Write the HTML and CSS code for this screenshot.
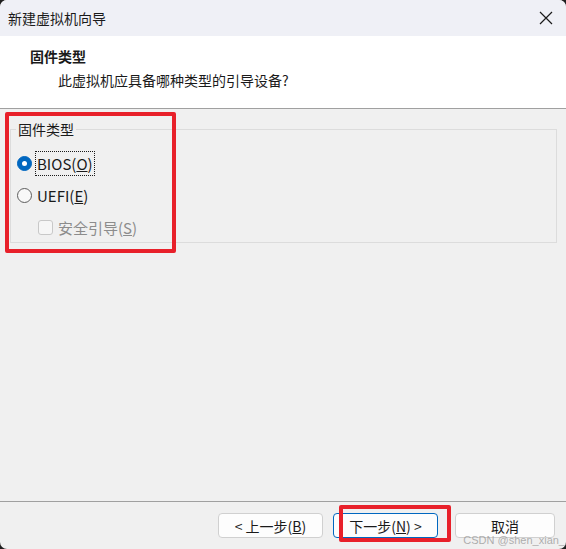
FILE: index.html
```html
<!DOCTYPE html>
<html lang="zh-CN">

<head>
  <meta charset="UTF-8">
  <title>新建虚拟机向导</title>
  <link rel="stylesheet" href="styles.css">
</head>

<body>
  <div class="janela">
    <!-- Barra de título -->
    <div class="titulo">
      <span>新建虚拟机向导</span>
      <svg class="fechar" width="14" height="14" viewBox="0 0 14 14">
        <path d="M1 1 L13 13 M13 1 L1 13" stroke="#1a1a1a" stroke-width="1.2" fill="none" />
      </svg>
    </div>

    <!-- Cabeçalho -->
    <div class="cabecalho">
      <div class="cab-titulo">固件类型</div>
      <div class="cab-sub">此虚拟机应具备哪种类型的引导设备?</div>
    </div>

    <!-- Conteúdo -->
    <div class="conteudo">
      <fieldset class="grupo">
        <legend>固件类型</legend>
        <label class="opcao">
          <span class="radio marcado"></span>
          <span class="foco">BIOS(<u>O</u>)</span>
        </label>
        <label class="opcao">
          <span class="radio"></span>
          <span>UEFI(<u>E</u>)</span>
        </label>
        <label class="opcao desativado">
          <span class="caixa"></span>
          <span>安全引导(<u>S</u>)</span>
        </label>
      </fieldset>
      <div class="marca marca-grupo"></div>
    </div>

    <!-- Rodapé com botões -->
    <div class="rodape">
      <button class="botao">&lt; 上一步(<u>B</u>)</button>
      <button class="botao padrao">下一步(<u>N</u>) &gt;</button>
      <button class="botao cancelar">取消</button>
      <div class="marca marca-botao"></div>
      <span class="agua">CSDN @shen_xian_</span>
    </div>
  </div>
</body>

</html>
```

FILE: styles.css
```css
/* Estilos Gerais */
html,
body {
  margin: 0;
  height: 100%;
  background: #1f1f1f;
}

body {
  font-family: "Noto Sans CJK SC", "Noto Sans", sans-serif;
  font-size: 14px;
  color: #1a1a1a;
}

.janela {
  display: flex;
  flex-direction: column;
  height: 549px;
  width: 566px;
  background: #f0f0f0;
  border-radius: 7px;
  overflow: hidden;
}

/* Barra de título */
.titulo {
  display: flex;
  align-items: center;
  justify-content: space-between;
  height: 36px;
  padding: 0 13px 0 8px;
  background: #eff0f6;
  line-height: 1;
}

/* Cabeçalho */
.cabecalho {
  background: #ffffff;
  border-bottom: 1px solid #a0a0a0;
  box-sizing: border-box;
  height: 73px;
  padding-top: 10px;
}

.cab-titulo {
  font-weight: bold;
  padding-left: 30px;
  line-height: 20px;
}

.cab-sub {
  padding-left: 58px;
  margin-top: 4px;
  line-height: 20px;
}

/* Conteúdo */
.conteudo {
  flex: 1;
  position: relative;
  padding: 12px 9px 0 10px;
}

.grupo {
  margin: 0;
  height: 122px;
  box-sizing: border-box;
  border: 1px solid #dcdcdc;
  padding: 10px 0 0 6px;
}

.grupo legend {
  padding: 0 2px;
  margin-left: -1px;
  line-height: 16px;
}

.opcao {
  display: flex;
  align-items: center;
  gap: 5px;
  height: 32px;
}

.opcao .foco,
.opcao span:last-child {
  font-size: 15px;
}

.radio {
  width: 13px;
  height: 13px;
  border: 1px solid #5d5d5d;
  border-radius: 50%;
  background: #f8f8f8;
  position: relative;
}

.radio.marcado {
  background: #0067c0;
  border-color: #0067c0;
}

.radio.marcado::after {
  content: "";
  position: absolute;
  left: 4px;
  top: 4px;
  width: 5px;
  height: 5px;
  border-radius: 50%;
  background: #ffffff;
}

.foco {
  outline: 1px dotted #1a1a1a;
  padding: 1px 1px;
  margin-left: -1px;
}

.desativado {
  color: #8c8c8c;
  padding-left: 21px;
  gap: 5px;
}

.caixa {
  width: 13px;
  height: 13px;
  border: 1px solid #c8c8c8;
  border-radius: 3px;
  background: #f6f6f6;
}

/* Marcações vermelhas */
.marca {
  position: absolute;
  border: 4px solid #e8202a;
  border-radius: 2px;
}

.marca-grupo {
  left: 5px;
  top: 3px;
  width: 163px;
  height: 133px;
}

/* Rodapé */
.rodape {
  position: relative;
  display: flex;
  justify-content: flex-end;
  align-items: flex-start;
  height: 48px;
  box-sizing: border-box;
  border-top: 1px solid #a0a0a0;
  padding: 11px 11px 0 0;
}

.botao {
  width: 105px;
  height: 25px;
  font-family: inherit;
  font-size: 14px;
  color: #1a1a1a;
  background: #fdfdfd;
  border: 1px solid #d0d0d0;
  border-radius: 4px;
  padding: 0;
  line-height: 1;
}

.botao.padrao {
  border-color: #0067c0;
  margin-left: 10px;
}

.botao.cancelar {
  width: 100px;
  margin-left: 17px;
}

.marca-botao {
  left: 339px;
  top: 3px;
  width: 104px;
  height: 29px;
}

.agua {
  position: absolute;
  right: 1px;
  top: 32px;
  font-family: "Liberation Sans", sans-serif;
  font-size: 11px;
  line-height: 12px;
  color: rgba(150, 150, 150, 0.75);
}
```
